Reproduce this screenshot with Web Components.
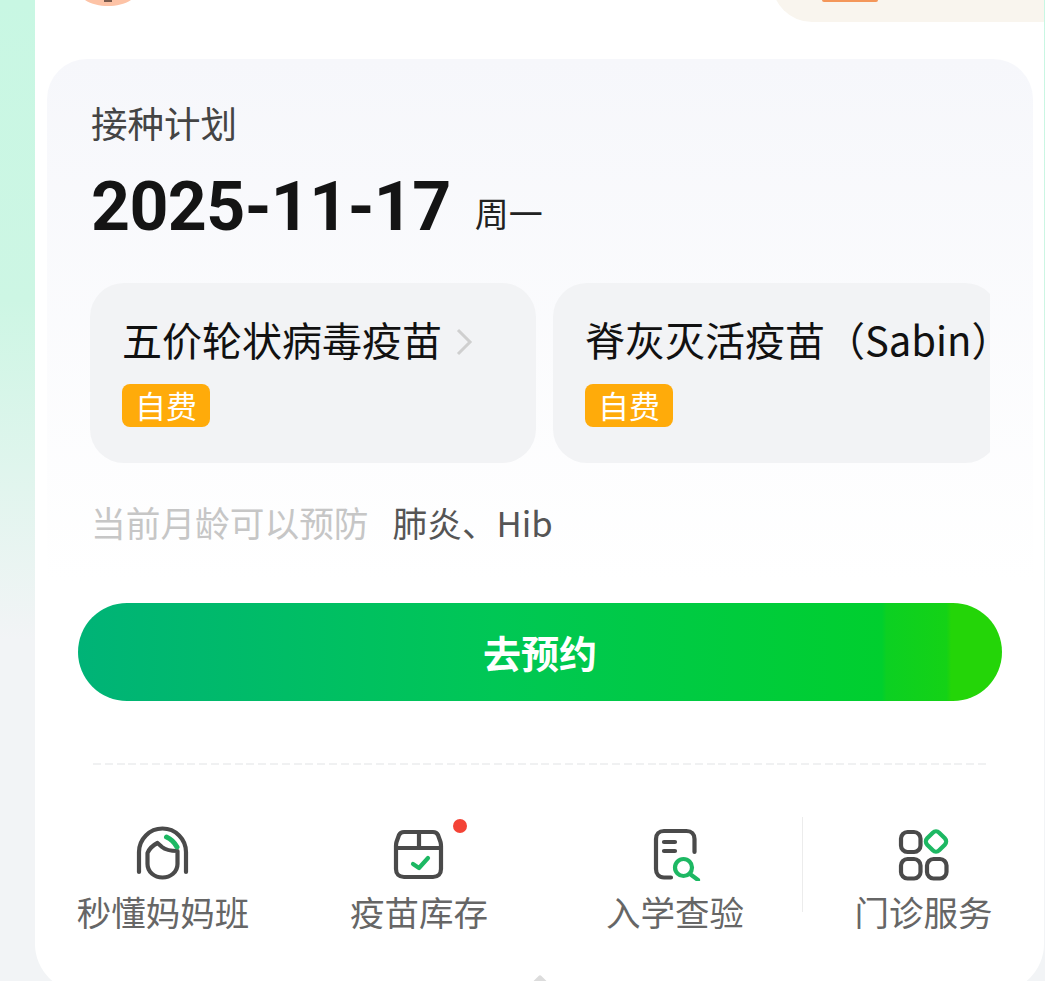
<!DOCTYPE html>
<html lang="zh">
<head>
<meta charset="utf-8">
<title>接种计划</title>
<style>
    html, body { margin: 0; height: 100%; }
    body {
        overflow: hidden;
        font-family: "Noto Sans CJK SC", "Noto Sans", sans-serif;
    }
    svg .ink { fill: none; stroke: #4a4a4a; stroke-width: 4.2; stroke-linecap: round; stroke-linejoin: round; }
    svg .accent { fill: none; stroke: #1db863; stroke-width: 4.2; stroke-linecap: round; stroke-linejoin: round; }
</style>
</head>
<body>
<app-shell>
    <top-peek></top-peek>
    <plan-card label="接种计划" date="2025-11-17" weekday="周一" action="去预约">
        <vaccine-item slot="items" link>五价轮状病毒疫苗</vaccine-item>
        <vaccine-item slot="items">脊灰灭活疫苗（Sabin）</vaccine-item>
        <span slot="prevent-label">当前月龄可以预防</span>
        <span slot="prevent-value">肺炎、Hib</span>
    </plan-card>
    <quick-nav>
        <quick-entry label="秒懂妈妈班">
            <svg viewBox="135 824 56 56" width="56" height="56">
                <path class="ink" d="M139 871V851a23.500 23.500 0 0 1 47 0V871"/>
                <path class="ink" d="M147.500 852V863c0 8 7 13.500 15 13.500s15-5.500 15-13.500V850c-6.500 0-12.500-1.500-15.500-4l-4.500-4c-4 2-8 5.500-10 10z"/>
                <path class="accent" stroke-width="5" style="stroke-width:5" d="M166.500 836c4.500 2 8 5.500 10.500 10"/>
            </svg>
        </quick-entry>
        <quick-entry label="疫苗库存" dot>
            <svg viewBox="391 824 56 56" width="56" height="56">
                <path class="ink" d="M404 831H433c2.500 0 4 1 5 3l2.500 7c.5 1.500.5 2.500.5 4V868c0 5-3 8-8 8H404c-5 0-8-3-8-8V845c0-1.500 0-2.500.5-4l2.500-7c1-2 2.500-3 5-3z"/>
                <path class="ink" d="M397 847H441M419 831V847"/>
                <path class="accent" d="M413 863L419 867L428 857"/>
            </svg>
        </quick-entry>
        <quick-entry label="入学查验">
            <svg viewBox="647 824 56 56" width="56" height="56">
                <path class="ink" d="M694.500 851V838c0-5-3-8-8-8H664c-5 0-8 3-8 8V868c0 5 3 8.500 8 8.500H671"/>
                <path class="ink" d="M664 841H675M664 850H675"/>
                <circle class="accent" cx="683.500" cy="866.500" r="8.500"/>
                <path class="accent" d="M690 873L698 879"/>
            </svg>
        </quick-entry>
        <quick-entry label="门诊服务" divided>
            <svg viewBox="896 824 56 56" width="56" height="56">
                <rect class="ink" x="901" y="831" width="19.500" height="20" rx="6.500"/>
                <rect class="ink" x="901" y="858" width="19.500" height="19.500" rx="6.500"/>
                <rect class="ink" x="927" y="858" width="19.500" height="19.500" rx="6.500"/>
                <rect class="accent" x="927.500" y="832" width="17" height="17" rx="4.500" transform="rotate(45 936 840.500)"/>
            </svg>
        </quick-entry>
    </quick-nav>
</app-shell>

<script>
class AppShell extends HTMLElement {
    constructor() {
        super();
        this.attachShadow({ mode: 'open' });
        this.shadowRoot.innerHTML = `
            <style>
                :host {
                    display: flex;
                    height: 981px;
                    padding-left: 35px;
                    box-sizing: border-box;
                    overflow: hidden;
                    position: relative;
                    background: linear-gradient(180deg, #c8f7e3 0, #cdf6e4 300px, #f2f4f6 640px);
                }
                .sheet {
                    width: 1009px;
                    height: 992px;
                    flex: none;
                    background: #fff;
                    border-radius: 0 0 48px 48px;
                    display: flex;
                    flex-direction: column;
                }
                .handle {
                    position: absolute;
                    left: 534px;
                    top: 977px;
                    width: 12px;
                    height: 12px;
                    background: #dcdcdc;
                    transform: rotate(45deg);
                    border-radius: 2px;
                }
            </style>
            <div class="sheet"><slot></slot></div>
            <div class="handle"></div>
        `;
    }
}

class TopPeek extends HTMLElement {
    constructor() {
        super();
        this.attachShadow({ mode: 'open' });
        this.shadowRoot.innerHTML = `
            <style>
                :host {
                    display: flex;
                    justify-content: space-between;
                    align-items: flex-start;
                    height: 22px;
                    margin-bottom: 37px;
                    padding-left: 50px;
                }
                .avatar { display: block; }
                .offer {
                    width: 272px;
                    height: 62px;
                    margin-top: -40px;
                    background: #f9f5ee;
                    border-radius: 0 0 0 40px;
                    padding: 40px 0 0 50px;
                    box-sizing: border-box;
                }
                .pill {
                    width: 56px;
                    height: 2px;
                    background: #f4975a;
                    border-radius: 0 0 6px 6px;
                }
            </style>
            <svg class="avatar" width="46" height="6" viewBox="0 0 46 6">
                <path d="M0 0H46C40 4 31 6 23 6S6 4 0 0Z" fill="#fdc3a6"/>
                <rect x="19" y="0" width="8" height="2" fill="#7a5a4c"/>
            </svg>
            <div class="offer"><div class="pill"></div></div>
        `;
    }
}

class PlanCard extends HTMLElement {
    constructor() {
        super();
        this.attachShadow({ mode: 'open' });
        this.shadowRoot.innerHTML = `
            <style>
                :host {
                    display: block;
                    margin: 0 11px 0 12px;
                    padding: 42px 31px 0;
                    border-radius: 40px 40px 0 0;
                    background: linear-gradient(180deg, #f6f7fb 0, #fff 74%);
                }
                .label {
                    margin-left: 13px;
                    font-size: 36.500px;
                    line-height: 44px;
                    color: #444;
                }
                .date-row {
                    display: flex;
                    align-items: flex-start;
                    gap: 24px;
                    margin: 27px 0 0 13px;
                    height: 70px;
                    line-height: 70px;
                }
                .date {
                    font-family: Roboto, sans-serif;
                    font-weight: 700;
                    font-size: 68px;
                    letter-spacing: -0.6px;
                    color: #141414;
                }
                .weekday {
                    margin-top: 19px;
                    font-size: 34px;
                    line-height: 44px;
                    color: #222;
                }
                .items {
                    display: flex;
                    gap: 17px;
                    margin: 41px 12px 0;
                    overflow: hidden;
                }
                .prevent {
                    display: flex;
                    gap: 24px;
                    margin: 37px 0 0 13px;
                    font-size: 34.700px;
                    line-height: 44px;
                }
                .prevent-label { color: #c6c6c6; }
                .prevent-value { color: #555; }
                .action {
                    margin-top: 59px;
                    height: 98px;
                    border-radius: 49px;
                    background: linear-gradient(90deg, #00b377 0, #00c755 45%, #00cf2e 87%, #0cd022 87.500%, #14d216 94%, #24d508 94.500%);
                    color: #fff;
                    font-size: 38px;
                    font-weight: 700;
                    line-height: 98px;
                    text-align: center;
                }
                .dash {
                    height: 2px;
                    margin: 62px 15px 0;
                    background: repeating-linear-gradient(90deg, #f0f1f2 0 8px, transparent 8px 11.800px);
                }
            </style>
            <div class="label"></div>
            <div class="date-row">
                <span class="date"></span>
                <span class="weekday"></span>
            </div>
            <div class="items"><slot name="items"></slot></div>
            <div class="prevent">
                <span class="prevent-label"><slot name="prevent-label"></slot></span>
                <span class="prevent-value"><slot name="prevent-value"></slot></span>
            </div>
            <div class="action"></div>
            <div class="dash"></div>
        `;
        this.shadowRoot.querySelector('.label').textContent = this.getAttribute('label');
        this.shadowRoot.querySelector('.date').textContent = this.getAttribute('date');
        this.shadowRoot.querySelector('.weekday').textContent = this.getAttribute('weekday');
        this.shadowRoot.querySelector('.action').textContent = this.getAttribute('action');
    }
}

class VaccineItem extends HTMLElement {
    constructor() {
        super();
        this.attachShadow({ mode: 'open' });
        const chevron = this.hasAttribute('link')
            ? '<svg width="18" height="28" viewBox="0 0 18 28"><path d="M3 2L15 14L3 26" fill="none" stroke="#cfcfcf" stroke-width="3"/></svg>'
            : '';
        this.shadowRoot.innerHTML = `
            <style>
                :host {
                    display: block;
                    flex: none;
                    width: 446px;
                    height: 180px;
                    box-sizing: border-box;
                    padding: 31px 0 0 32px;
                    border-radius: 34px;
                    background: #f2f3f5;
                }
                .title {
                    display: flex;
                    align-items: center;
                    gap: 13px;
                    height: 50px;
                    white-space: nowrap;
                    font-size: 40px;
                    color: #111;
                }
                .title svg { margin-top: 6px; }
                .tag {
                    display: inline-block;
                    margin-top: 20px;
                    width: 88px;
                    height: 43px;
                    border-radius: 8px;
                    background: #ffab0a;
                    color: #fff;
                    font-size: 31px;
                    line-height: 41px;
                    text-align: center;
                }
            </style>
            <div class="title"><span><slot></slot></span>${chevron}</div>
            <span class="tag">自费</span>
        `;
    }
}

class QuickNav extends HTMLElement {
    constructor() {
        super();
        this.attachShadow({ mode: 'open' });
        this.shadowRoot.innerHTML = `
            <style>
                :host {
                    display: grid;
                    grid-template-columns: 256px 256px 256px 1fr;
                    margin-top: 60px;
                }
            </style>
            <slot></slot>
        `;
    }
}

class QuickEntry extends HTMLElement {
    constructor() {
        super();
        this.attachShadow({ mode: 'open' });
        this.shadowRoot.innerHTML = `
            <style>
                :host {
                    display: flex;
                    flex-direction: column;
                    align-items: center;
                    position: relative;
                }
                .icon { position: relative; height: 56px; }
                ::slotted(svg) { display: block; }
                .dot {
                    position: absolute;
                    left: 62px;
                    top: -6px;
                    width: 14px;
                    height: 14px;
                    border-radius: 50%;
                    background: #f44336;
                }
                .text {
                    font-size: 34.500px;
                    line-height: 44px;
                    margin-top: 8px;
                    color: #666;
                    white-space: nowrap;
                }
                .rule {
                    position: absolute;
                    left: -1px;
                    top: -8px;
                    width: 1px;
                    height: 95px;
                    background: #ececec;
                }
            </style>
            ${this.hasAttribute('divided') ? '<div class="rule"></div>' : ''}
            <div class="icon">
                <slot></slot>
                ${this.hasAttribute('dot') ? '<div class="dot"></div>' : ''}
            </div>
            <div class="text"></div>
        `;
        this.shadowRoot.querySelector('.text').textContent = this.getAttribute('label');
    }
}

customElements.define('app-shell', AppShell);
customElements.define('top-peek', TopPeek);
customElements.define('plan-card', PlanCard);
customElements.define('vaccine-item', VaccineItem);
customElements.define('quick-nav', QuickNav);
customElements.define('quick-entry', QuickEntry);
</script>
</body>
</html>
